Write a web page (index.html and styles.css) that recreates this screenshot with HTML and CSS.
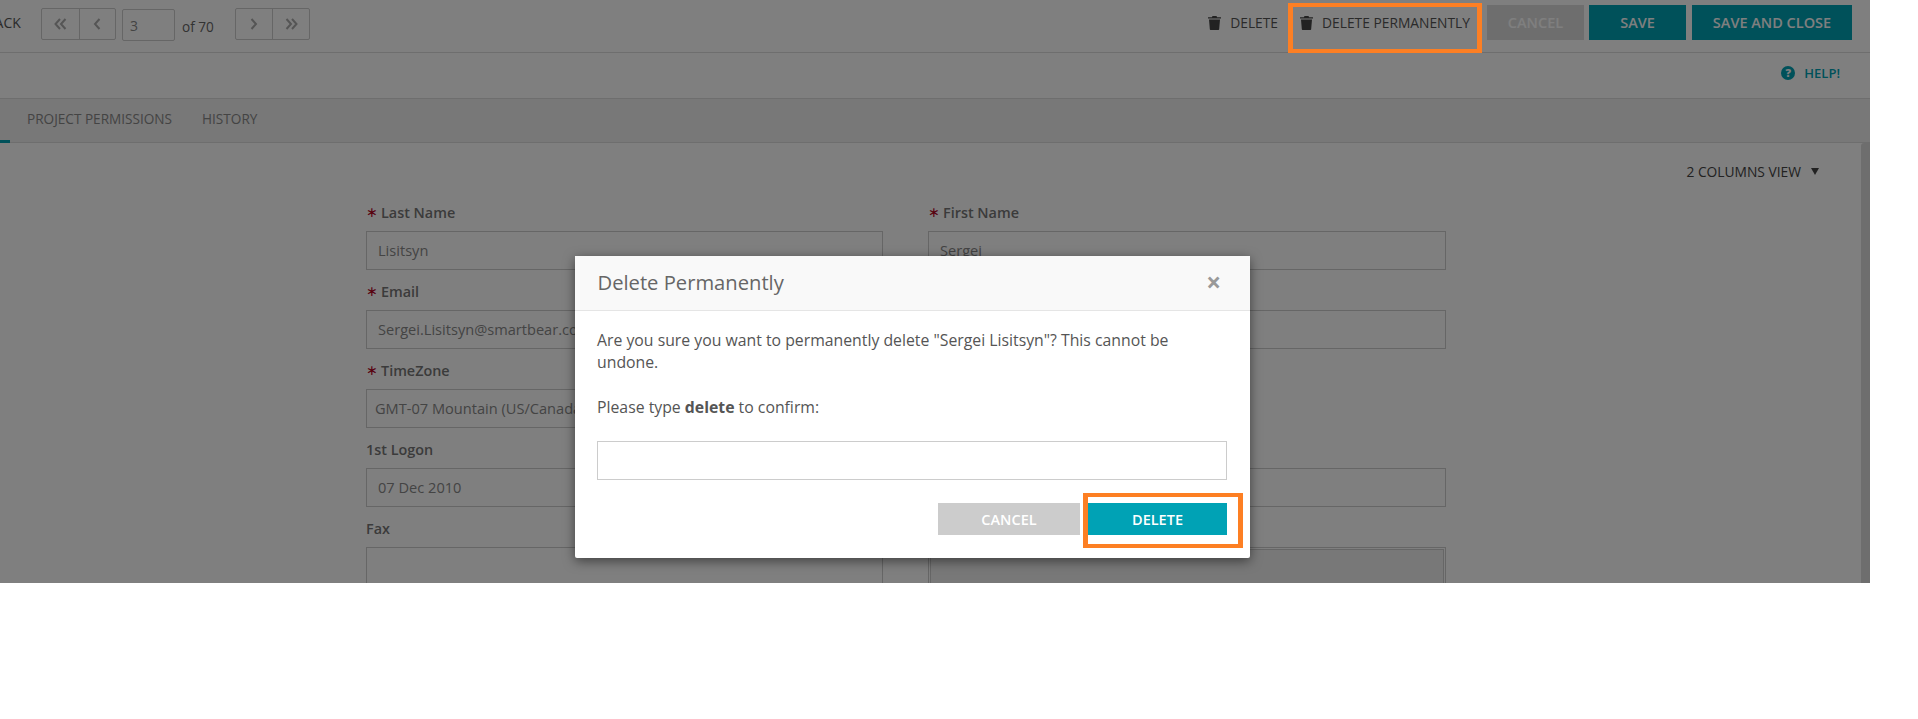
FILE: index.html
```html
<!DOCTYPE html>
<html lang="en">
<head>
  <meta charset="UTF-8" />
  <title>Edit User</title>
  <link rel="stylesheet" href="styles.css">
</head>
<body>
  <div class="page">
    <!-- top toolbar -->
    <div class="toolbar">
      <span class="back-link">BACK</span>
      <div class="pager-group">
        <button class="pager-btn"><svg width="13" height="12" viewBox="0 0 13 12"><path d="M6 1 1.500 6 6 11M11.500 1 7 6l4.500 5"/></svg></button>
        <button class="pager-btn"><svg width="8" height="12" viewBox="0 0 8 12"><path d="M6.500 1 2 6l4.500 5"/></svg></button>
      </div>
      <input class="pager-input" type="text" value="3" />
      <span class="pager-total">of 70</span>
      <div class="pager-group">
        <button class="pager-btn"><svg width="8" height="12" viewBox="0 0 8 12"><path d="M1.500 1 6 6l-4.500 5"/></svg></button>
        <button class="pager-btn"><svg width="13" height="12" viewBox="0 0 13 12"><path d="M1.500 1 6 6l-4.500 5M7 1l4.500 5L7 11"/></svg></button>
      </div>

      <div class="toolbar-actions">
        <a class="tool-link">
          <svg class="trash" width="13" height="14" viewBox="0 0 13 14"><path d="M4.500 0h4l.6 1.200H12.600c.3 0 .4.200.4.400v1H0v-1c0-.2.100-.4.400-.4h3.500zM1 3.600h11l-.8 9.400c0 .6-.5 1-1 1H2.800c-.5 0-1-.4-1-1z"/></svg>
          DELETE
        </a>
        <a class="tool-link tool-link-perm">
          <svg class="trash" width="13" height="14" viewBox="0 0 13 14"><path d="M4.500 0h4l.6 1.200H12.600c.3 0 .4.200.4.400v1H0v-1c0-.2.100-.4.400-.4h3.500zM1 3.600h11l-.8 9.400c0 .6-.5 1-1 1H2.800c-.5 0-1-.4-1-1z"/></svg>
          DELETE PERMANENTLY
        </a>
        <button class="btn btn-disabled">CANCEL</button>
        <button class="btn btn-teal btn-save">SAVE</button>
        <button class="btn btn-teal btn-close">SAVE AND CLOSE</button>
      </div>
    </div>

    <div class="help-bar">
      <span class="help-icon">?</span>
      <span class="help-text">HELP!</span>
    </div>

    <div class="tabs">
      <span class="tab-active"></span>
      <span class="tab tab-permissions">PROJECT PERMISSIONS</span>
      <span class="tab">HISTORY</span>
    </div>

    <div class="content">
      <div class="view-row">
        <span>2 COLUMNS VIEW</span>
        <i class="caret"></i>
      </div>

      <div class="form-grid">
        <div class="field">
          <label><b class="req">&lowast;</b>Last Name</label>
          <input class="val-a" type="text" value="Lisitsyn" />
        </div>
        <div class="field">
          <label><b class="req">&lowast;</b>First Name</label>
          <input class="val-a" type="text" value="Sergei" />
        </div>
        <div class="field">
          <label><b class="req">&lowast;</b>Email</label>
          <input class="val-a" type="text" value="Sergei.Lisitsyn@smartbear.com" />
        </div>
        <div class="field">
          <label>&nbsp;</label>
          <input type="text" />
        </div>
        <div class="field">
          <label><b class="req">&lowast;</b>TimeZone</label>
          <input class="val-b" type="text" value="GMT-07 Mountain (US/Canada)" />
        </div>
        <div class="field"></div>
        <div class="field">
          <label>1st Logon</label>
          <input class="val-c" type="text" value="07 Dec 2010" />
        </div>
        <div class="field">
          <label>&nbsp;</label>
          <input type="text" />
        </div>
        <div class="field">
          <label>Fax</label>
          <div class="area"></div>
        </div>
        <div class="field">
          <label>&nbsp;</label>
          <div class="area area-double"><div class="area-inner"></div></div>
        </div>
      </div>
    </div>

    <div class="scroll-thumb"></div>
    <div class="backdrop"></div>

    <div class="modal">
      <div class="modal-head">
        <span class="modal-title">Delete Permanently</span>
        <span class="modal-close">&times;</span>
      </div>
      <div class="modal-body">
        <p class="confirm-text">Are you sure you want to permanently delete "Sergei Lisitsyn"? This cannot be undone.</p>
        <p class="confirm-line">Please type <strong>delete</strong> to confirm:</p>
        <input class="confirm-input" type="text" />
        <div class="modal-actions">
          <button class="btn modal-cancel">CANCEL</button>
          <button class="btn modal-delete">DELETE</button>
        </div>
      </div>
    </div>

    <!-- orange callouts drawn on the screenshot -->
    <div class="callout callout-top"></div>
    <div class="callout callout-modal"></div>
  </div>
</body>
</html>
```

FILE: styles.css
```css
html, body {
  margin: 0; padding: 0;
  height: 719px;
  background: #fff;
  font-family: "Open Sans", sans-serif;
  overflow: hidden;
}
.page {
  position: relative;
  width: 1870px;
  height: 583px;
  overflow: hidden;
  background: #fff;
  color: #666;
}
button, input {
  font-family: inherit;
  box-sizing: border-box;
}

/* toolbar */
.toolbar {
  display: flex;
  align-items: flex-start;
  height: 53px;
  box-sizing: border-box;
  padding: 5px 18px 0 0;
  border-bottom: 1px solid #ddd;
}
.back-link {
  flex: none;
  margin-left: -14.500px;
  width: 55.500px;
  line-height: 36px;
  font-size: 14px;
  color: #555;
}
.pager-group {
  display: flex;
  margin-top: 3px;
  border: 1px solid #ccc;
  border-radius: 2px;
  height: 32px;
  box-sizing: border-box;
}
.pager-btn {
  width: 36.500px;
  padding: 0;
  border: none;
  background: none;
  display: flex;
  align-items: center;
  justify-content: center;
}
.pager-btn + .pager-btn { border-left: 1px solid #ccc; }
.pager-btn svg {
  fill: none;
  stroke: #aaa;
  stroke-width: 2;
}
.pager-input {
  width: 53px;
  height: 32px;
  margin: 4px 0 0 6px;
  padding: 0 7px;
  border: 1px solid #ccc;
  border-radius: 2px;
  font-size: 14px;
  color: #888;
  background: none;
}
.pager-total {
  margin: 4px 21px 0 7px;
  line-height: 35px;
  font-size: 13.600px;
  color: #666;
}
.toolbar-actions {
  display: flex;
  align-items: flex-start;
  margin-left: auto;
}
.tool-link {
  display: flex;
  align-items: center;
  gap: 9px;
  height: 35px;
  font-size: 13.800px;
  color: #555;
}
.trash { fill: #444; }
.tool-link-perm { margin: 0 17px 0 22px; }
.btn {
  height: 35px;
  width: 97px;
  padding: 0;
  border: none;
  font-size: 14.500px;
  font-weight: 600;
  color: #fff;
}
.btn-disabled { background: #ddd; color: #fff; }
.btn-teal { background: #00a2b5; }
.btn-save { margin-left: 5px; }
.btn-close { margin-left: 6px; width: 160px; }

/* help bar */
.help-bar {
  display: flex;
  align-items: center;
  justify-content: flex-end;
  gap: 9px;
  height: 46px;
  box-sizing: border-box;
  padding: 0 30px 5px 0;
  border-bottom: 1px solid #ddd;
  color: #00a2b5;
}
.help-icon {
  width: 14px;
  height: 14px;
  border-radius: 50%;
  background: #00a2b5;
  color: #fff;
  font-size: 11px;
  font-weight: 800;
  line-height: 14px;
  text-align: center;
}
.help-text { font-size: 13px; font-weight: 600; }

/* tabs */
.tabs {
  position: relative;
  display: flex;
  align-items: center;
  gap: 30px;
  height: 44px;
  box-sizing: border-box;
  padding: 0 0 4px 27px;
  background: #f0f0f0;
  border-bottom: 1px solid #ddd;
  font-size: 13.600px;
  color: #888;
}
.tab-active {
  position: absolute;
  left: 0; bottom: -1px;
  width: 10px;
  height: 3px;
  background: #00a2b5;
}

/* form */
.view-row {
  display: flex;
  align-items: center;
  justify-content: flex-end;
  gap: 10px;
  height: 22px;
  padding: 17px 51px 20px 0;
  font-size: 13.800px;
  color: #444;
}
.caret {
  width: 0; height: 0;
  border-left: 4px solid transparent;
  border-right: 4px solid transparent;
  border-top: 7px solid #444;
}
.form-grid {
  display: grid;
  grid-template-columns: 517px 518px;
  grid-auto-rows: 79px;
  column-gap: 45px;
  margin-left: 366px;
  width: 1080px;
}
.field label {
  display: block;
  height: 29px;
  line-height: 22px;
  font-size: 14.400px;
  font-weight: 600;
  color: #777;
}
.req {
  display: inline-block;
  width: 15px;
  font-size: 14px;
  line-height: 20px;
  vertical-align: 1px;
  color: #b00020;
  font-weight: 400;
}
.field input {
  display: block;
  width: 100%;
  height: 39px;
  border: 1px solid #ccc;
  background: none;
  font-size: 14.600px;
  color: #888;
}
.val-a { padding: 0 11px 2px; }
.val-b { padding: 0 8px 2px; }
.val-c { padding: 0 11px 2px; }
.area {
  height: 60px;
  box-sizing: border-box;
  border: 1px solid #ccc;
}
.area-double { padding: 1px; }
.area-inner {
  height: 100%;
  box-sizing: border-box;
  border: 1px solid #ccc;
  background: #f0f0f0;
}

.scroll-thumb {
  position: absolute;
  right: 0; top: 143px; bottom: 0;
  width: 9px;
  background: #ddd;
  border-top-left-radius: 3px;
}
.backdrop {
  position: absolute;
  inset: 0;
  background: rgba(0,0,0,0.5);
}

/* modal */
.modal {
  position: absolute;
  left: 575px; top: 256px;
  width: 675px;
  background: #fff;
  border-radius: 2px;
  box-shadow: 0 3px 12px rgba(0,0,0,0.5);
}
.modal-head {
  display: flex;
  align-items: center;
  justify-content: space-between;
  height: 55px;
  box-sizing: border-box;
  padding: 0 29px 2px 22.500px;
  background: #f9f9f9;
  border-bottom: 1px solid #e5e5e5;
}
.modal-title { font-size: 20.200px; color: #666; }
.modal-close {
  font-size: 26px;
  font-weight: 700;
  color: #999;
}
.modal-body {
  padding: 18px 23px 23px 22px;
  font-size: 15.800px;
  line-height: 22px;
  color: #555;
}
.modal-body p { margin: 0 0 23px; }
.modal-body .confirm-text { max-width: 600px; margin-bottom: 23px; }
.modal-body strong { font-weight: 700; }
.confirm-input {
  display: block;
  width: 100%;
  height: 39px;
  border: 1px solid #ccc;
  background: #fff;
}
.modal-actions {
  display: flex;
  justify-content: flex-end;
  gap: 8px;
  margin-top: 23px;
}
.modal-cancel { width: 142px; height: 32px; background: #ccc; }
.modal-delete { width: 139px; height: 32px; background: #00a2b5; }

.callout {
  position: absolute;
  box-sizing: border-box;
  border: solid #fd7f23;
  border-width: 4px 5px;
}
.callout-top { left: 1288px; top: 3px; width: 194px; height: 50px; }
.callout-modal { left: 1083px; top: 493px; width: 160px; height: 55px; }
```
